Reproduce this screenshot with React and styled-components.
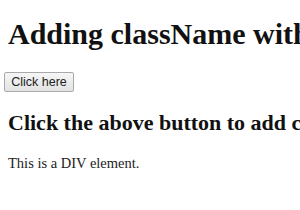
import React, { useState } from 'react';
import styled, { createGlobalStyle } from 'styled-components';

const GlobalStyle = createGlobalStyle`
  html, body {
    margin: 0;
    padding: 0;
    background: #fff;
  }

  body {
    font-family: "Liberation Serif", "Times New Roman", serif;
    color: #111;
  }
`;

const Page = styled.div`
  padding: 1px 0 0 8px;
  overflow: hidden;
  white-space: nowrap;
`;

const Title = styled.h1`
  margin: 16px 0 0;
  font-size: 30px;
  line-height: 34px;
  font-weight: bold;
`;

const Button = styled.button`
  display: block;
  margin: 21px 0 0 -4px;
  width: 70px;
  height: 20px;
  padding: 0;
  font-family: "Liberation Sans", Arial, sans-serif;
  font-size: 12.5px;
  color: #222;
  background: linear-gradient(#f6f6f6, #e3e3e3);
  border: 1px solid #a9a9a9;
  border-radius: 2px;
`;

const Subtitle = styled.h2`
  margin: 18px 0 0;
  font-size: 22px;
  line-height: 25px;
  font-weight: bold;
`;

const Text = styled.p`
  margin: 20px 0 0;
  font-size: 14.5px;
  line-height: 17px;
  color: ${(p) => (p.highlight ? '#c00' : '#222')};
`;

export default function App() {
  const [added, setAdded] = useState(false);

  return (
    <Page>
      <GlobalStyle />
      <Title>Adding className with JavaScript</Title>
      <Button type="button" onClick={() => setAdded(true)}>Click here</Button>
      <Subtitle>Click the above button to add class</Subtitle>
      <Text highlight={added}>This is a DIV element.</Text>
    </Page>
  );
}
